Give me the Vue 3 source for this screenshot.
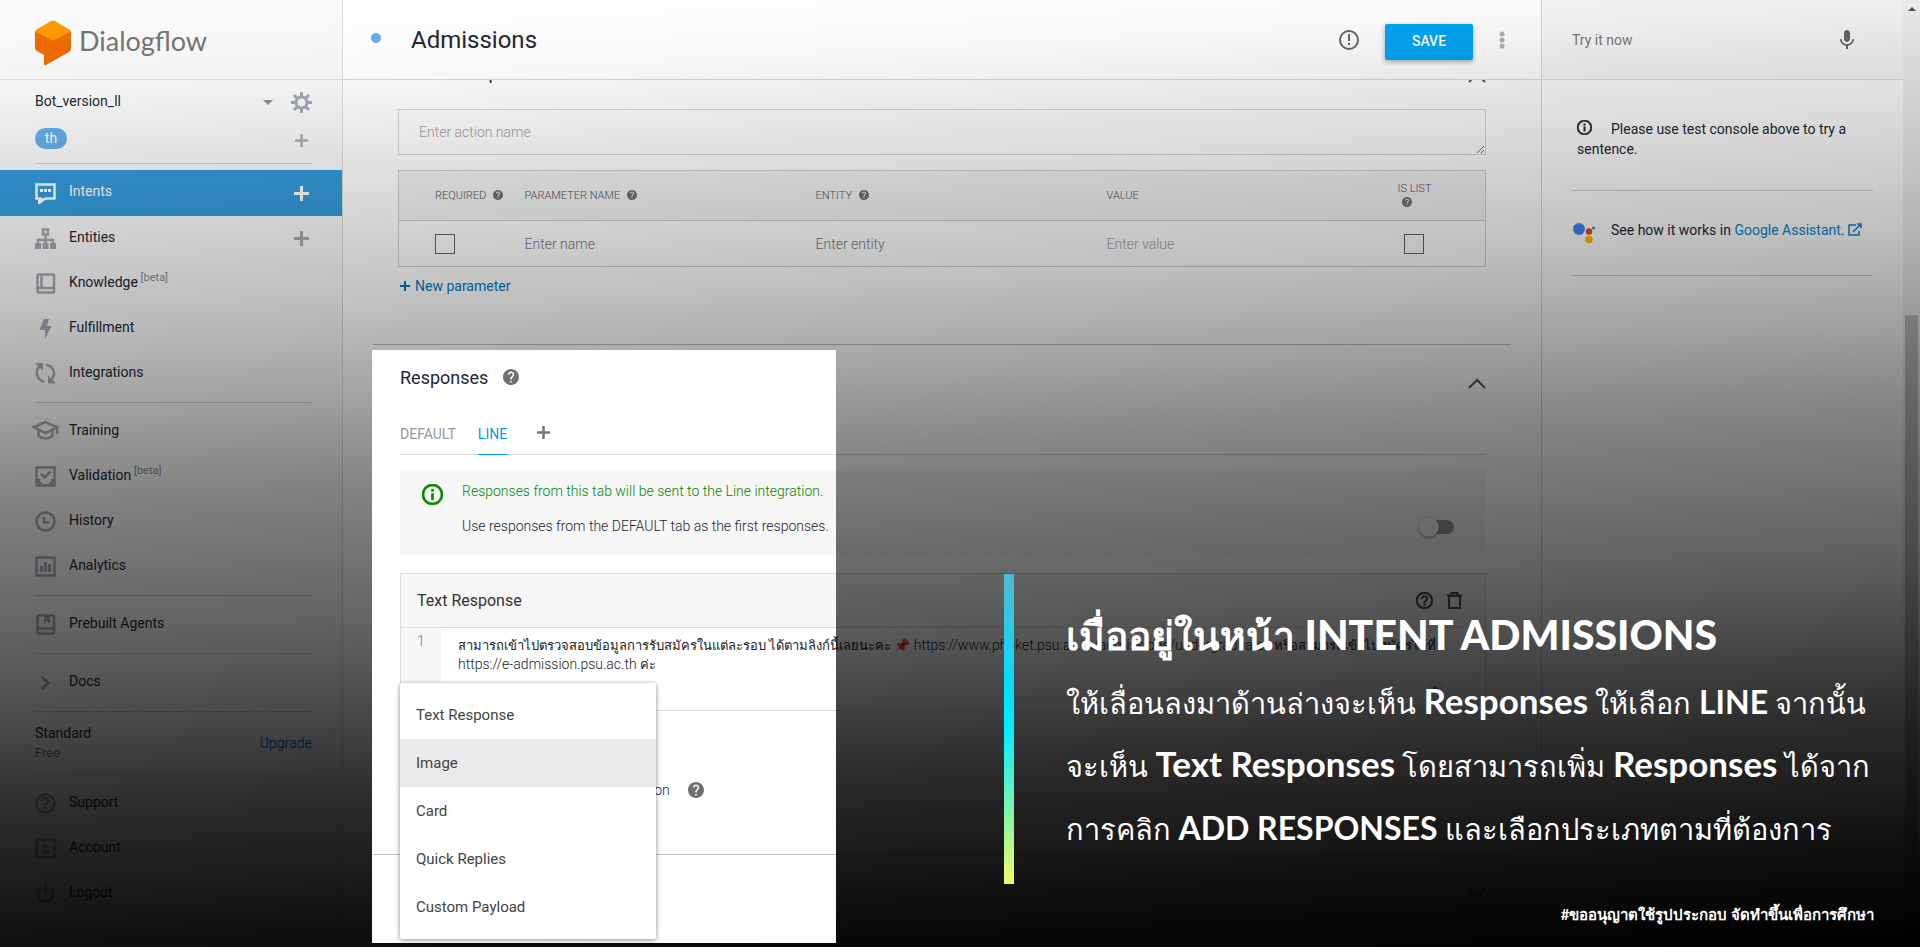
<script setup>
const helpFilled =
  'M12 2C6.48 2 2 6.48 2 12s4.48 10 10 10 10-4.48 10-10S17.52 2 12 2zm1 17h-2v-2h2v2zm2.07-7.75l-.9.92C13.45 12.9 13 13.5 13 15h-2v-.5c0-1.1.45-2.1 1.17-2.83l1.24-1.26c.37-.36.59-.86.59-1.41 0-1.1-.9-2-2-2s-2 .9-2 2H8c0-2.21 1.79-4 4-4s4 1.79 4 4c0 .88-.36 1.68-.93 2.25z'
const helpOutline =
  'M11 18h2v-2h-2v2zm1-16C6.48 2 2 6.48 2 12s4.48 10 10 10 10-4.48 10-10S17.52 2 12 2zm0 18c-4.41 0-8-3.59-8-8s3.59-8 8-8 8 3.59 8 8-3.59 8-8 8zm0-14c-2.21 0-4 1.79-4 4h2c0-1.1.9-2 2-2s2 .9 2 2c0 2-3 1.75-3 5h2c0-2.25 3-2.5 3-5 0-2.21-1.79-4-4-4z'
const infoOutline =
  'M11 17h2v-6h-2v6zm1-15C6.48 2 2 6.48 2 12s4.48 10 10 10 10-4.48 10-10S17.52 2 12 2zm0 18c-4.41 0-8-3.59-8-8s3.59-8 8-8 8 3.59 8 8-3.59 8-8 8zM11 9h2V7h-2v2z'

/* fill: solid shapes, line: stroked shapes, both on a 21 x 21 grid */
const groups = [
  [
    { label: 'Intents', active: true, add: true, fill: 'M5 6h3v3H5zM9 6h3v3H9zM13 6h3v3h-3zM3 15l8 1-6 5H3z', line: 'M1.5 1.5h18v14h-9l-5 3v-3h-4z' },
    { label: 'Entities', add: true, fill: 'M0 15h6v6H0zM7.500 15h6v6h-6zM15 15h6v6h-6z', line: 'M8 1.5h5v5H8zM10.5 7v8M3 16v-4h15v4' },
    { label: 'Knowledge', tag: '[beta]', fill: '', line: 'M4 1.500h14q1 0 1 1v16q0 1-1 1H4q-1.500 0-1.500-1.500V3q0-1.500 1.500-1.500zM6.500 2v13M3 15h16' },
    { label: 'Fulfillment', fill: 'M9 1h5l-2 7h4.500L10 21v-9H4.500z', line: '' },
    { label: 'Integrations', fill: 'M0 0h8v8zM21 20.500h-8v-8z', line: 'M4.500 3.500C0 8 1 16 9 19M11 2c8 1 10.500 9 5 15' },
  ],
  [
    { label: 'Training', fill: '', line: 'M-1 6l11.500-5L22 6l-11.500 6zM3.500 9v6q7 5 14 0V9M22 6v7' },
    { label: 'Validation', tag: '[beta]', fill: 'M1 13h4v3h2v2h7v-2h2v-3h4v7H1z', line: 'M1.500 1.500h18v18h-18zM6 8l3.500 3.500 6-6' },
    { label: 'History', fill: '', line: 'M10.500 1.500a9 9 0 1 1 0 18a9 9 0 1 1 0-18zM9 6v5.500h5' },
    { label: 'Analytics', fill: 'M5 10h3v6H5zM9 6h3v10H9zM13 8h3v8h-3z', line: 'M1.500 1.500h18v18h-18z' },
  ],
  [{ label: 'Prebuilt Agents', fill: 'M9 1h6v9l-3-3-3 3z', line: 'M4 1.500h14q1 0 1 1v16q0 1-1 1H4q-1.500 0-1.500-1.500V3q0-1.500 1.500-1.500zM3 14.500h16' }],
  [{ label: 'Docs', fill: '', line: 'M7 5l6 6-6 6' }],
]
const account = [
  { label: 'Support', fill: '', line: 'M10.500 1.500a9 9 0 1 1 0 18a9 9 0 1 1 0-18zM7.500 8q0-3 3-3t3 3q0 1-1.500 2t-1.500 2.500M10.500 14v2.500' },
  { label: 'Account', fill: 'M6 16q0-4 4.500-4t4.500 4zM8 8a2.500 2.500 0 1 1 5 0a2.500 2.500 0 1 1-5 0', line: 'M1.500 1.500h18v18h-18z' },
  { label: 'Logout', fill: '', line: 'M10.500 0v10M6 4.500C0 9 3 19 10.500 19S21 9 15 4.500' },
]
const responseTypes = ['Text Response', 'Image', 'Card', 'Quick Replies', 'Custom Payload']
</script>

<template>
  <div class="page">
    <aside class="sidebar">
      <div class="brand">
        <svg width="36" height="46" viewBox="0 0 36 46" aria-hidden="true">
          <path d="M0 11L18 20 36 11V28Q36 31 34 32L11 45Q9 46 9 43V35L2 31Q0 30 0 28z" fill="#ef6c00" />
          <path d="M1 10L16 1Q18 0 20 1L35 10Q36 11 35 12L18 20.500 1 12Q0 11 1 10z" fill="#ff9800" />
        </svg>
        <span>Dialogflow</span>
      </div>
      <div class="agent">
        <div class="agent-row">
          <span class="agent-name">Bot_version_ll</span>
          <svg class="caret" width="10" height="5" viewBox="0 0 10 5"><path d="M0 0h10L5 5z" /></svg>
          <button class="icon-button" aria-label="Settings">
            <svg width="21" height="21" viewBox="0 0 21 21" fill="none" stroke="#a3a9b3">
              <circle cx="10.500" cy="10.500" r="5.500" stroke-width="3" />
              <path d="M10.500 0v4M10.500 17v4M0 10.500h4M17 10.500h4M3 3l3 3M15 15l3 3M18 3l-3 3M6 15l-3 3" stroke-width="3" />
            </svg>
          </button>
        </div>
        <div class="agent-row lang-row">
          <span class="lang">th</span>
          <button class="icon-button" aria-label="Add language">
            <svg width="21" height="21" viewBox="0 0 21 21"><path d="M10.500 4v13M4 10.500h13" stroke="#a9afb9" stroke-width="2.500" /></svg>
          </button>
        </div>
      </div>
      <nav>
        <div v-for="(group, g) in groups" :key="g" class="group">
          <div v-for="item in group" :key="item.label" class="item" :class="{ active: item.active }">
            <a href="#">
              <svg width="21" height="21" viewBox="0 0 21 21" overflow="visible">
                <path :d="item.fill" fill="currentColor" />
                <path :d="item.line" fill="none" stroke="currentColor" stroke-width="2.500" />
              </svg>
              <span>{{ item.label }}<sup v-if="item.tag">&nbsp;{{ item.tag }}</sup></span>
            </a>
            <button v-if="item.add" class="icon-button" :aria-label="'Create ' + item.label">
              <svg width="21" height="21" viewBox="0 0 21 21"><path d="M10.500 3v15M3 10.500h15" stroke="currentColor" stroke-width="3" /></svg>
            </button>
          </div>
        </div>
        <div class="plan">
          <div><strong>Standard</strong><small>Free</small></div>
          <a href="#">Upgrade</a>
        </div>
        <div class="group">
          <div v-for="item in account" :key="item.label" class="item">
            <a href="#">
              <svg width="21" height="21" viewBox="0 0 21 21" overflow="visible">
                <path :d="item.fill" fill="currentColor" />
                <path :d="item.line" fill="none" stroke="currentColor" stroke-width="2.500" />
              </svg>
              <span>{{ item.label }}</span>
            </a>
          </div>
        </div>
      </nav>
    </aside>

    <main class="main">
      <header class="topbar">
        <i class="dot"></i>
        <h1>Admissions</h1>
        <svg width="22" height="22" viewBox="0 0 22 22" fill="none" stroke="#666" stroke-width="2">
          <circle cx="11" cy="11" r="9" /><path d="M11 5v7M11 14v2" />
        </svg>
        <button class="save">SAVE</button>
        <button class="icon-button" aria-label="More">
          <svg width="6" height="18" viewBox="0 0 6 18" fill="#b0b3bd"><circle cx="3" cy="3" r="2.500" /><circle cx="3" cy="9" r="2.500" /><circle cx="3" cy="15" r="2.500" /></svg>
        </button>
      </header>

      <div class="scroller">
        <section class="parameters">
          <div class="section-head clipped">
            <h2>Action and parameters</h2>
            <svg class="chevron" width="18" height="11" viewBox="0 0 18 11"><path d="M1 10l8-8 8 8" /></svg>
          </div>
          <textarea class="action" placeholder="Enter action name" aria-label="Action name"></textarea>
          <table>
            <thead>
              <tr>
                <th class="c-required">REQUIRED <svg class="q" viewBox="2 2 20 20"><path :d="helpFilled" /></svg></th>
                <th>PARAMETER NAME <svg class="q" viewBox="2 2 20 20"><path :d="helpFilled" /></svg></th>
                <th>ENTITY <svg class="q" viewBox="2 2 20 20"><path :d="helpFilled" /></svg></th>
                <th>VALUE</th>
                <th class="c-list">IS LIST<br /><svg class="q" viewBox="2 2 20 20"><path :d="helpFilled" /></svg></th>
              </tr>
            </thead>
            <tbody>
              <tr>
                <td class="c-required"><input type="checkbox" class="box" aria-label="Required" /></td>
                <td><input class="field dark" placeholder="Enter name" aria-label="Parameter name" /></td>
                <td><input class="field dark" placeholder="Enter entity" aria-label="Entity" /></td>
                <td><input class="field" placeholder="Enter value" aria-label="Value" /></td>
                <td class="c-list"><input type="checkbox" class="box list-box" aria-label="Is list" /></td>
              </tr>
            </tbody>
          </table>
          <button class="new-parameter">
            <svg width="10" height="10" viewBox="0 0 10 10"><path d="M5 0v10M0 5h10" stroke="currentColor" stroke-width="2" /></svg>
            New parameter
          </button>
        </section>

        <section class="responses">
          <div class="section-head">
            <h2>Responses</h2>
            <svg class="q large" viewBox="2 2 20 20"><path :d="helpFilled" /></svg>
            <svg class="chevron" width="18" height="11" viewBox="0 0 18 11"><path d="M1 10l8-8 8 8" /></svg>
          </div>
          <div class="tabs">
            <button>DEFAULT</button>
            <button class="current">LINE</button>
            <button aria-label="Add integration tab">
              <svg width="13" height="13" viewBox="0 0 13 13"><path d="M6.500 0v13M0 6.500h13" stroke="#777" stroke-width="2.500" /></svg>
            </button>
          </div>
          <div class="banner">
            <svg width="21" height="21" viewBox="2 2 20 20"><path :d="infoOutline" fill="#008a00" stroke="#008a00" stroke-width=".6" /></svg>
            <div class="banner-text">
              <p class="green">Responses from this tab will be sent to the Line integration.</p>
              <label for="first">Use responses from the DEFAULT tab as the first responses.</label>
            </div>
            <input id="first" type="checkbox" class="toggle" />
          </div>
          <div class="card">
            <div class="card-head">
              <h3>Text Response</h3>
              <button class="icon-button" aria-label="Help"><svg width="17" height="17" viewBox="2 2 20 20"><path :d="helpOutline" fill="#444" stroke="#444" stroke-width=".6" /></svg></button>
              <button class="icon-button" aria-label="Delete">
                <svg width="15" height="17" viewBox="0 0 15 17" fill="none" stroke="#555" stroke-width="2"><path d="M2 4h11v12H2zM0 3.500h15M4.500 3V1h6v2" /></svg>
              </button>
            </div>
            <div class="card-body">
              <span class="line-number">1</span>
              <div class="response-text" contenteditable="true" role="textbox" aria-multiline="true" aria-label="Text response">
                <div><span>สามารถเข้าไปตรวจสอบข้อมูลการรับสมัครในแต่ละรอบ ได้ตามลิงก์นี้เลยนะคะ 📌</span> https://www.phuket.psu.ac.th/admissions/undergraduate/ <span>หรือสามารถเข้าไปสมัครได้ที่</span></div>
                <div>https://e-admission.psu.ac.th <span>ค่ะ</span></div>
              </div>
              <svg class="stepper" width="16" height="28" viewBox="0 0 16 28"><path d="M0 0h16v28H0z" fill="#eee" /><path d="M4 8l4-4 4 4zM4 20l4 4 4-4z" fill="#777" /></svg>
            </div>
          </div>
          <div class="adder">
            <ul class="menu">
              <li v-for="type in responseTypes" :key="type">
                <button :class="{ hover: type === 'Image' }">{{ type }}</button>
              </li>
            </ul>
          </div>
          <div class="ending">
            <input id="ending" type="checkbox" class="toggle" />
            <label for="ending">Set this intent as end of conversation</label>
            <svg class="q large" viewBox="2 2 20 20"><path :d="helpFilled" /></svg>
          </div>
        </section>
        <section class="fulfillment">
          <svg class="chevron" width="18" height="11" viewBox="0 0 18 11"><path d="M1 1l8 8 8-8" /></svg>
        </section>
      </div>
    </main>

    <aside class="console">
      <div class="try">
        <input placeholder="Try it now" aria-label="Try it now" />
        <button class="icon-button" aria-label="Speak">
          <svg width="24" height="24" viewBox="0 0 24 24"><path fill="#666" d="M12 14c1.660 0 2.990-1.340 2.990-3L15 5c0-1.660-1.340-3-3-3S9 3.340 9 5v6c0 1.660 1.340 3 3 3zm5.300-3c0 3-2.540 5.100-5.300 5.100S6.700 14 6.700 11H5c0 3.410 2.720 6.230 6 6.720V21h2v-3.280c3.280-.480 6-3.300 6-6.720h-1.700z" /></svg>
        </button>
      </div>
      <div class="hints">
        <p class="hint">
          <svg width="15" height="15" viewBox="2 2 20 20"><path :d="infoOutline" fill="#222" stroke="#222" stroke-width=".6" /></svg>Please use test console above to try a sentence.
        </p>
        <p class="assistant">
          <svg width="24" height="22" viewBox="0 0 24 22">
            <circle cx="7" cy="7" r="6" fill="#4285f4" /><circle cx="17" cy="9.500" r="3.200" fill="#ea4335" /><circle cx="17" cy="17.500" r="3.700" fill="#fbbc05" /><circle cx="21.500" cy="6" r="1.600" fill="#34a853" />
          </svg>
          <span>See how it works in <a href="#">Google Assistant</a>. <a href="#" aria-label="Open in new window"><svg width="14" height="13" viewBox="0 0 14 13" fill="none" stroke="currentColor" stroke-width="1.500"><path d="M8 2H1v10h10V8M5 9l8-8M9 1h4v4" /></svg></a></span>
        </p>
      </div>
    </aside>

    <div class="scrollbar">
      <svg width="8" height="4" viewBox="0 0 8 4"><path d="M0 4l4-4 4 4z" fill="#505050" /></svg>
      <i></i>
    </div>

    <div class="shade"></div>
    <div class="caption">
      <h2>เมื่ออยู่ในหน้า <b>INTENT ADMISSIONS</b></h2>
      <p>ให้เลื่อนลงมาด้านล่างจะเห็น <b>Responses</b> ให้เลือก <b class="caps">LINE</b> จากนั้น</p>
      <p>จะเห็น <b>Text Responses</b> โดยสามารถเพิ่ม <b>Responses</b> ได้จาก</p>
      <p>การคลิก <b class="caps">ADD RESPONSES</b> และเลือกประเภทตามที่ต้องการ</p>
    </div>
    <p class="credit">#ขออนุญาตใช้รูปประกอบ จัดทำขึ้นเพื่อการศึกษา</p>
  </div>
</template>

<style>
body { background: #000; }
</style>

<style scoped>
* { box-sizing: border-box; }
.page { position: relative; display: flex; height: 100vh; overflow: hidden; background: #fff; color: #232636; font-family: Roboto, "Noto Sans", sans-serif; font-size: 14px; }
button { border: 0; padding: 0; background: none; font: inherit; color: inherit; }
a { color: inherit; text-decoration: none; }
h1, h2, h3, p, ul { margin: 0; padding: 0; font-weight: 400; }
svg { flex: none; }
.icon-button { display: flex; }

.sidebar { flex: none; width: 343px; border-right: 1px solid #dcdcdc; background: #fafafa; }
.brand { display: flex; align-items: center; gap: 8px; height: 80px; padding: 6px 35px 0; border-bottom: 1px solid #dcdcdc; font-family: Lato, sans-serif; font-size: 27px; color: #757575; }
.brand span { padding-bottom: 4px; }
.agent { margin: 0 30px 6px 35px; border-bottom: 1px solid #d5d5d5; }
.agent-row { display: flex; align-items: center; height: 45px; }
.agent-name { flex: 1; padding-bottom: 4px; }
.caret { margin-right: 18px; fill: #8b92a0; }
.lang-row { align-items: flex-start; justify-content: space-between; height: 38px; padding-top: 3px; }
.lang-row button { margin-top: 2px; }
.lang { width: 32px; height: 21px; border-radius: 11px; background: #64aeea; color: #fff; line-height: 20px; text-align: center; }
.group { padding-bottom: 6px; }
.group + .group, .plan + .group { padding-top: 6px; }
.group + .group::before, .plan::before, .plan + .group::before { content: ""; display: block; height: 1px; margin: 0 30px 0 35px; background: #d5d5d5; }
.group + .group::before, .plan + .group::before { margin-top: -6px; margin-bottom: 6px; }
.item { display: flex; align-items: center; justify-content: space-between; height: 45px; padding: 0 30px 0 35px; color: #a3a9b3; }
.item a { display: flex; align-items: center; gap: 13px; }
.item a span { padding-bottom: 3px; color: #232636; line-height: 20px; }
.item sup { font-size: 11px; color: #868b96; line-height: 0; }
.item.active { height: 46px; background: #349bdb; color: #fff; }
.item.active a span { padding-bottom: 4px; color: #fff; }
.plan { display: grid; grid-template: 1px 1fr / 1fr auto; align-items: center; height: 63px; padding: 0 30px 0 35px; }
.plan::before { grid-column: 1 / 3; margin: 0; }
.plan strong { display: block; font-weight: 400; line-height: 20px; }
.plan small { display: block; font-size: 13px; line-height: 20px; color: #777; }
.plan a { color: #1c86d1; }

.main { display: flex; flex: 1; flex-direction: column; min-width: 0; }
.topbar { display: flex; flex: none; align-items: center; height: 80px; padding: 0 36px 0 28px; border-bottom: 1px solid #dcdcdc; }
.dot { width: 10px; height: 10px; margin: 0 30px 4px 0; border-radius: 50%; background: #64aeea; }
h1 { flex: 1; font-size: 24px; }
.save { width: 88px; height: 36px; margin: 4px 26px 0 25px; padding-bottom: 2px; border-radius: 2px; background: #03a5f4; color: #fff; font-weight: 500; box-shadow: 0 2px 5px #0005; }
.scroller { flex: 1; overflow: hidden; padding: 0 30px; }
.section-head { display: flex; align-items: center; }
h2 { font-size: 18px; }
.chevron { margin-top: 12px; margin-left: auto; fill: none; stroke: #555; stroke-width: 2; }
.parameters { height: 293px; padding: 0 25px; border-bottom: 1px solid #c9bcc0; }
.clipped { height: 30px; margin-top: -28px; margin-bottom: 27px; }
.clipped h2 { padding-top: 11px; }
.clipped .chevron { margin-top: 20px; }
.action { display: block; width: 100%; height: 46px; padding: 13px 20px; border: 1px solid #d5d5d5; background: none; font: 300 14px/19px Roboto, sans-serif; outline: 0; }
::placeholder { color: #a0a0a8; opacity: 1; }
table { width: 100%; margin-top: 15px; border: 1px solid #d0d0d0; border-collapse: collapse; table-layout: fixed; }
thead tr { height: 50px; background: #f2f3f3; border-bottom: 1px solid #d0d0d0; }
th { padding: 0; font-size: 11px; font-weight: 300; line-height: 14px; text-align: left; color: #555; }
td { height: 46px; padding: 0; }
.c-required { width: 126px; padding-left: 36px; }
.c-list { width: 88px; }
.q { width: 10px; height: 10px; margin-left: 4px; fill: #707070; vertical-align: -1px; }
.q.large { width: 16px; height: 16px; margin-left: 15px; }
.box { display: block; width: 20px; height: 20px; margin: 0; border: 1px solid #666; appearance: none; }
.list-box { margin-left: 6px; }
.field { width: 100%; padding: 0; border: 0; background: none; font: 300 14px Roboto, sans-serif; }
.field.dark::placeholder { color: #777; }
.new-parameter { display: flex; align-items: center; gap: 5px; margin-top: 10px; margin-left: 2px; line-height: 18px; color: #0077c8; }

.responses { height: 510px; padding: 20px 25px 0 27px; border-bottom: 1px solid #c9bcc0; }
.responses .section-head { height: 24px; }
.tabs { display: flex; gap: 22px; align-items: center; height: 42px; margin-top: 24px; border-bottom: 1px solid #d8d8d8; }
.tabs button { height: 42px; padding-top: 1px; color: #9397a5; }
.tabs button:last-child { padding: 0 8px; }
.tabs .current { border-bottom: 1px solid #039be5; color: #039be5; }
.banner { display: flex; height: 85px; margin-top: 15px; padding: 12px 32px 0 22px; background: #f7f7f7; font-weight: 300; }
.banner svg { margin-top: 2px; }
.banner-text { flex: 1; margin-left: 19px; line-height: 19px; }
.banner-text .green { margin-bottom: 16px; color: #008a00; font-weight: 300; }
.toggle { position: relative; width: 30px; height: 14px; margin: 38px 0 0; border-radius: 7px; background: #999; appearance: none; }
.toggle::before { content: ""; position: absolute; left: -5px; top: -3px; width: 20px; height: 20px; border-radius: 50%; background: #fafafa; box-shadow: 0 1px 3px #0007; }
.card { height: 138px; margin-top: 18px; border: 1px solid #dcdcdc; }
.card-head { display: flex; gap: 14px; align-items: center; height: 54px; padding: 0 23px 0 16px; border-bottom: 1px solid #dcdcdc; background: #f7f7f7; }
h3 { flex: 1; font-size: 16px; color: #333; }
.card-body { display: flex; height: 82px; }
.line-number { width: 40px; padding: 5px 16px; background: #f7f7f7; color: #777; font-weight: 300; }
.response-text { flex: 1; min-width: 0; padding: 8px 17px; font-weight: 300; line-height: 19px; color: #222; white-space: nowrap; outline: 0; }
.response-text span { font-size: 13px; }
.stepper { align-self: flex-end; margin-right: 42px; }
.adder { position: relative; height: 60px; }
.menu { position: absolute; top: -28px; left: 0; z-index: 2; width: 256px; padding: 8px 0; border-radius: 2px; background: #fff; box-shadow: 0 1px 5px #0007; list-style: none; }
.menu button { width: 100%; height: 48px; padding: 0 16px; color: #444; font-size: 15px; text-align: left; }
.menu .hover { background: #ebebeb; }
.ending { display: flex; align-items: center; height: 38px; font-weight: 300; }
.ending .toggle { margin: 0 7px 0 6px; }
.ending .q { margin-left: 18px; }
.fulfillment { display: flex; align-items: center; height: 76px; padding: 0 25px; }
.fulfillment .chevron { margin-top: 0; }

.console { flex: none; width: 362px; border-left: 1px solid #d5d5d5; }
.try { display: flex; align-items: center; height: 80px; padding: 0 44px 0 30px; border-bottom: 1px solid #dcdcdc; background: #f7f7f7; }
.try input { flex: 1; min-width: 0; padding: 0; border: 0; background: none; font: 14px Roboto, sans-serif; }
.try input::placeholder { color: #777; }
.hints { padding: 0 30px; line-height: 20px; }
.hint { height: 111px; padding: 39px 0 0 5px; border-bottom: 1px solid #d0d0d0; }
.hint svg { margin-right: 19px; vertical-align: -1px; }
.assistant { display: flex; gap: 15px; height: 85px; padding-top: 29px; border-bottom: 1px solid #d0d0d0; }
.assistant svg { margin-top: 2px; }
.assistant a { color: #0288d1; }
.assistant a svg { margin: 0; vertical-align: -1px; }
.scrollbar { display: flex; flex: none; flex-direction: column; align-items: center; width: 17px; padding-top: 7px; background: #f1f1f1; }
.scrollbar i { width: 13px; flex: 1; margin-top: 304px; background: #c1c1c1; }

/* Dark tutorial veil with a clear window over the responses menu */
.shade {
  position: absolute; inset: 0; z-index: 3; pointer-events: none;
  background: linear-gradient(177deg, #0000 0, #0000 20px, #00000008 100px, #0000001a 170px, #00000042 335px, #0000005e 420px, #0000007a 500px, #000000a1 660px, #000000ba 740px, #000000d4 820px, #000000e6 900px, #000000f5 970px, #000 1040px);
  clip-path: polygon(evenodd, 0 0, 100% 0, 100% 100%, 0 100%, 0 0, 372px 350px, 836px 350px, 836px calc(100% - 4px), 372px calc(100% - 4px), 372px 350px);
}
.caption { position: absolute; right: 36px; bottom: 63px; z-index: 4; width: 880px; height: 310px; padding: 29px 0 0 52px; border-left: 10px solid; border-image: linear-gradient(#52bad2, #00dfff 38%, #00edff 50%, #e9fb6b 98%) 1; color: #fff; font-family: Lato, "Noto Sans", sans-serif; white-space: nowrap; }
.caption h2 { margin-bottom: 4px; font-size: 39px; font-weight: 700; line-height: 64px; }
.caption h2 b { font-size: 41px; line-height: 1; }
.caption p { font-size: 29px; line-height: 63px; }
.caption p b { font-size: 35px; line-height: 1; }
.caption p .caps { font-size: 32px; }
.credit { position: absolute; right: 46px; bottom: 21px; z-index: 4; color: #fff; font: 700 15px/24px Lato, "Noto Sans", sans-serif; }
</style>
